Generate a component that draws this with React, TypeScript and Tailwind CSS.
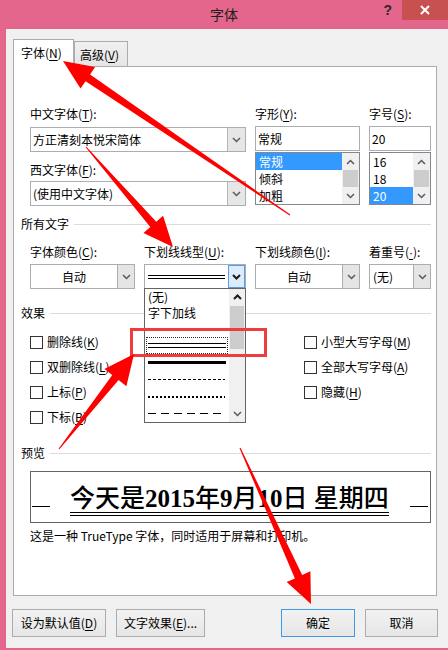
import React from "react";

const UI: React.CSSProperties = { fontFamily: '"Noto Sans CJK SC", "Noto Sans", sans-serif' };
const SERIF: React.CSSProperties = { fontFamily: '"Liberation Serif", "Noto Sans CJK SC", serif' };

function M({ t, k }: { t: string; k: string }) {
  const p = t.lastIndexOf("(" + k + ")");
  if (p < 0) return <>{t}</>;
  return (
    <>
      {t.slice(0, p + 1)}
      <span
        className="underline decoration-1 underline-offset-[2px]"
        style={k === "·" ? { fontFamily: '"Liberation Sans", sans-serif' } : undefined}
      >
        {k}
      </span>
      {t.slice(p + 2)}
    </>
  );
}

function Chev({ up = false, dark = false }: { up?: boolean; dark?: boolean }) {
  return (
    <svg width="9" height="6" viewBox="0 0 9 6">
      <path
        d={up ? "M1 5 L4.5 1.5 L8 5" : "M1 1 L4.5 4.5 L8 1"}
        fill="none"
        stroke={dark ? "#1a1a1a" : "#5a5a5a"}
        strokeWidth={dark ? 2 : 1.5}
      />
    </svg>
  );
}

function Label({ t, k }: { t: string; k: string }) {
  return (
    <div className="h-[16px] text-[12px] leading-[16px] text-black whitespace-nowrap">
      <M t={t} k={k} />
    </div>
  );
}

function EditCombo({ text }: { text: string }) {
  return (
    <div className="h-[25px] border border-[#abadb3] bg-white flex">
      <div className="flex-1 pl-[2px] text-[12px] leading-[23px] text-black whitespace-nowrap overflow-hidden">{text}</div>
      <div className="w-[18px] bg-[#e6e6e6] border-l border-[#b5b5b5] flex items-center justify-center">
        <Chev />
      </div>
    </div>
  );
}

function EditBox({ text }: { text: string }) {
  return (
    <div className="h-[25px] border border-[#abadb3] bg-white pl-[2px] text-[12px] leading-[23px] text-black">{text}</div>
  );
}

function ListBox({ items, sel }: { items: string[]; sel: number }) {
  return (
    <div className="h-[53px] border border-[#828790] bg-white flex">
      <div className="flex-1 flex flex-col">
        {items.map((it, i) => (
          <div
            key={it}
            className={
              i === sel
                ? "h-[17px] leading-[17px] pl-[3px] text-[12px] bg-[#3399ff] text-white"
                : "h-[17px] leading-[17px] pl-[3px] text-[12px] text-black"
            }
          >
            {it}
          </div>
        ))}
      </div>
      <div className="w-[17px] bg-[#f0f0f0] flex flex-col">
        <div className="h-[17px] flex items-center justify-center">
          <Chev up />
        </div>
        <div className="flex-1 mx-[1px] bg-[#cdcdcd]" />
        <div className="h-[17px] flex items-center justify-center">
          <Chev />
        </div>
      </div>
    </div>
  );
}

function DropCombo({ children, focus = false, center = false }: { children: React.ReactNode; focus?: boolean; center?: boolean }) {
  return (
    <div className="h-[25px] border border-[#acacac] bg-white flex">
      <div
        className={
          center
            ? "flex-1 flex items-center justify-center text-[12px] text-black"
            : "flex-1 flex items-center pl-[3px] text-[12px] text-black"
        }
      >
        {children}
      </div>
      <div
        className={
          focus
            ? "w-[17px] border border-[#569de5] bg-[#dcecfc] flex items-center justify-center"
            : "w-[17px] border-l border-[#acacac] bg-[#e5e5e5] flex items-center justify-center"
        }
      >
        <Chev dark={focus} />
      </div>
    </div>
  );
}

function Check({ t, k }: { t: string; k: string }) {
  return (
    <div className="h-[16px] flex items-center">
      <div className="w-[13px] h-[13px] border border-[#333333] bg-white" />
      <span className="ml-[4px] text-[12px] leading-[16px] text-black whitespace-nowrap">
        <M t={t} k={k} />
      </span>
    </div>
  );
}

function Group({ t, gap }: { t: string; gap: string }) {
  return (
    <div className={`-ml-[9px] flex items-center h-[16px] ${gap}`}>
      <span className="text-[12px] leading-[16px] text-black whitespace-nowrap">{t}</span>
      <div className="flex-1 h-px bg-[#dcdcdc] ml-[5px]" />
    </div>
  );
}

function Btn({ w, children, def = false }: { w: string; children: React.ReactNode; def?: boolean }) {
  return (
    <div
      className={
        def
          ? `h-[28px] ${w} border border-[#3c9ae7] flex items-center justify-center text-[12px] text-black bg-linear-to-b from-[#f2f2f2] to-[#e6e6e6]`
          : `h-[28px] ${w} border border-[#acacac] flex items-center justify-center text-[12px] text-black bg-linear-to-b from-[#f2f2f2] to-[#e6e6e6]`
      }
    >
      {children}
    </div>
  );
}

function arrowPts(x1: number, y1: number, x2: number, y2: number, tw: number, sw: number, hl: number, hw: number) {
  const dx = x2 - x1;
  const dy = y2 - y1;
  const L = Math.hypot(dx, dy);
  const ux = dx / L;
  const uy = dy / L;
  const nx = -uy;
  const ny = ux;
  const bx = x2 - ux * hl;
  const by = y2 - uy * hl;
  const p = [
    [x1 + (nx * tw) / 2, y1 + (ny * tw) / 2],
    [bx + (nx * sw) / 2, by + (ny * sw) / 2],
    [bx + (nx * hw) / 2, by + (ny * hw) / 2],
    [x2, y2],
    [bx - (nx * hw) / 2, by - (ny * hw) / 2],
    [bx - (nx * sw) / 2, by - (ny * sw) / 2],
    [x1 - (nx * tw) / 2, y1 - (ny * tw) / 2],
  ];
  return p.map((q) => `${q[0].toFixed(1)},${q[1].toFixed(1)}`).join(" ");
}

function LineRow({ children, focus = false }: { children: React.ReactNode; focus?: boolean }) {
  return (
    <div className="h-[17px] px-[1px] flex">
      <div
        className={
          focus
            ? "flex-1 border border-dotted border-[#2a2a2a] flex items-center px-[1px]"
            : "flex-1 border border-transparent flex items-center px-[1px]"
        }
      >
        {children}
      </div>
    </div>
  );
}

function UnderlineList() {
  return (
    <div className="absolute left-0 top-[24px] w-[102px] h-[135px] border border-[#646464] bg-white flex z-10">
      <div className="flex-1 flex flex-col">
        <div className="h-[16px] leading-[16px] pl-[3px] text-[12px] text-black">(无)</div>
        <div className="h-[15px] leading-[15px] pl-[3px] text-[12px] text-black">字下加线</div>
        <LineRow>
          <div className="w-full h-px bg-black" />
        </LineRow>
        <LineRow focus>
          <div className="w-full flex flex-col gap-[3px]">
            <div className="h-px bg-black" />
            <div className="h-px bg-black" />
          </div>
        </LineRow>
        <LineRow>
          <div className="w-full h-[3px] bg-black" />
        </LineRow>
        <LineRow>
          <svg width="77" height="1" className="block">
            <line x1="0" y1="0.5" x2="77" y2="0.5" stroke="#000" strokeWidth="1" strokeDasharray="3 2" />
          </svg>
        </LineRow>
        <LineRow>
          <svg width="77" height="2" className="block">
            <line x1="0" y1="1" x2="77" y2="1" stroke="#000" strokeWidth="2" strokeDasharray="2 2" />
          </svg>
        </LineRow>
        <LineRow>
          <svg width="77" height="1" className="block">
            <line x1="0" y1="0.5" x2="77" y2="0.5" stroke="#000" strokeWidth="1" strokeDasharray="8 5" />
          </svg>
        </LineRow>
      </div>
      <div className="w-[16px] bg-[#f0f0f0] flex flex-col">
        <div className="h-[16px] flex items-center justify-center">
          <Chev up dark />
        </div>
        <div className="h-[43px] mt-[1px] mx-[1px] bg-[#cdcdcd]" />
        <div className="flex-1" />
        <div className="h-[16px] flex items-center justify-center">
          <Chev />
        </div>
      </div>
    </div>
  );
}

function Cjk({ children }: { children: React.ReactNode }) {
  return (
    <span className="font-medium" style={{ fontFamily: '"Noto Sans CJK SC", sans-serif' }}>
      {children}
    </span>
  );
}

export default function App() {
  return (
    <div className="relative w-[448px] h-[650px] bg-[#e4668c] overflow-hidden flex flex-col" style={UI}>
      {/* title bar */}
      <div className="h-[29px] shrink-0 grid grid-cols-[1fr_auto_1fr]">
        <div />
        <div className="text-[14px] leading-[28px] text-[#1e1e1e]">字体</div>
        <div className="flex justify-end items-start">
          <span className="mt-[2px] mr-[10px] text-[14px] font-bold leading-[16px] text-[#2a2a2a]" style={{ fontFamily: '"Liberation Sans", sans-serif' }}>
            ?
          </span>
          <div className="w-[46px] h-[20px] bg-[#c75050] flex items-center justify-center">
            <svg width="10" height="10" viewBox="0 0 10 10">
              <path d="M1 1 L9 9 M9 1 L1 9" stroke="#fff" strokeWidth="2" />
            </svg>
          </div>
        </div>
      </div>

      {/* client */}
      <div className="ml-[6px] h-[619px] bg-[#f0f0f0] flex flex-col">
        {/* tabs */}
        <div className="ml-[7px] mt-[10px] h-[27px] flex items-end relative z-10">
          <div className="w-[61px] h-[28px] -mb-px bg-white border border-b-0 border-[#acacac] pl-[7px] text-[12px] leading-[26px] text-black">
            <M t="字体(N)" k="N" />
          </div>
          <div className="w-[54px] h-[25px] bg-linear-to-b from-[#f0f0f0] to-[#e5e5e5] border border-b-0 border-[#acacac] pl-[5px] text-[12px] leading-[25px] text-black">
            <M t="高级(V)" k="V" />
          </div>
        </div>

        {/* panel */}
        <div className="ml-[7px] w-[424px] h-[530px] shrink-0 border border-[#acacac] bg-white pt-[39px] pl-[16px] pr-[5px] flex flex-col">
          <div className="flex gap-[9px]">
            <div className="w-[216px] flex flex-col">
              <Label t="中文字体(T):" k="T" />
              <div className="mt-[5px]">
                <EditCombo text="方正清刻本悦宋简体" />
              </div>
              <div className="mt-[10px]">
                <Label t="西文字体(F):" k="F" />
              </div>
              <div className="mt-[3px]">
                <EditCombo text="(使用中文字体)" />
              </div>
            </div>
            <div className="w-[105px] flex flex-col">
              <Label t="字形(Y):" k="Y" />
              <div className="mt-[4px]">
                <EditBox text="常规" />
              </div>
              <div className="mt-[1px]">
                <ListBox items={["常规", "倾斜", "加粗"]} sel={0} />
              </div>
            </div>
            <div className="w-[62px] flex flex-col">
              <Label t="字号(S):" k="S" />
              <div className="mt-[4px]">
                <EditBox text="20" />
              </div>
              <div className="mt-[1px]">
                <ListBox items={["16", "18", "20"]} sel={2} />
              </div>
            </div>
          </div>

          <Group t="所有文字" gap="mt-[10px]" />

          <div className="mt-[12px] flex gap-[9px]">
            <div className="w-[105px] flex flex-col">
              <Label t="字体颜色(C):" k="C" />
              <div className="mt-[4px]">
                <DropCombo center>自动</DropCombo>
              </div>
            </div>
            <div className="w-[102px] flex flex-col">
              <Label t="下划线线型(U):" k="U" />
              <div className="mt-[4px] relative">
                <DropCombo focus>
                  <div className="w-[77px] flex flex-col gap-[2px] mt-px">
                    <div className="h-px bg-black" />
                    <div className="h-px bg-black" />
                  </div>
                </DropCombo>
                <UnderlineList />
              </div>
            </div>
            <div className="w-[105px] flex flex-col">
              <Label t="下划线颜色(I):" k="I" />
              <div className="mt-[4px]">
                <DropCombo center>自动</DropCombo>
              </div>
            </div>
            <div className="w-[62px] flex flex-col">
              <Label t="着重号(·):" k="·" />
              <div className="mt-[4px]">
                <DropCombo>(无)</DropCombo>
              </div>
            </div>
          </div>

          <Group t="效果" gap="mt-[16px]" />

          <div className="mt-[13px] flex">
            <div className="w-[274px] flex flex-col gap-[9px]">
              <Check t="删除线(K)" k="K" />
              <Check t="双删除线(L)" k="L" />
              <Check t="上标(P)" k="P" />
              <Check t="下标(B)" k="B" />
            </div>
            <div className="flex flex-col gap-[9px]">
              <Check t="小型大写字母(M)" k="M" />
              <Check t="全部大写字母(A)" k="A" />
              <Check t="隐藏(H)" k="H" />
            </div>
          </div>

          <Group t="预览" gap="mt-[20px]" />

          <div className="mt-[10px] w-[401px] h-[52px] border border-[#646464] flex items-start">
            <div className="ml-[1px] mt-[34px] w-[18px] h-px bg-black" />
            <div className="ml-[20px] mt-[11px] border-b-[4px] border-double border-black">
              <div className="text-[25px] leading-[26px] font-bold text-black whitespace-nowrap" style={SERIF}>
                <Cjk>今天是</Cjk>2015<Cjk>年</Cjk>9<Cjk>月</Cjk>10<Cjk>日</Cjk> <Cjk>星期四</Cjk>
              </div>
            </div>
            <div className="ml-auto mr-[2px] mt-[34px] w-[18px] h-px bg-black" />
          </div>

          <div className="mt-[5px] h-[16px] text-[12px] leading-[16px] text-black">
            这是一种 TrueType 字体，同时适用于屏幕和打印机。
          </div>
        </div>

        {/* buttons */}
        <div className="mt-[13px] pl-[6px] pr-[10px] flex justify-between">
          <div className="flex gap-[10px]">
            <Btn w="w-[94px]">
              <M t="设为默认值(D)" k="D" />
            </Btn>
            <Btn w="w-[89px]">
              <M t="文字效果(E)..." k="E" />
            </Btn>
          </div>
          <div className="flex gap-[10px]">
            <Btn w="w-[74px]" def>
              确定
            </Btn>
            <Btn w="w-[73px]">取消</Btn>
          </div>
        </div>
      </div>

      {/* annotations overlay */}
      <svg className="absolute inset-0 pointer-events-none z-20" width="448" height="650" viewBox="0 0 448 650">
        <rect x="131.5" y="329.5" width="134" height="26" fill="none" stroke="#f03c3c" strokeWidth="3" />
        <polygon points={arrowPts(290, 215, 63, 61, 1, 8, 30, 26)} fill="#ff0000" />
        <polygon points={arrowPts(86, 147, 173, 247, 1, 8, 30, 26)} fill="#ff0000" />
        <polygon points={arrowPts(59, 449, 134, 354, 1, 8, 30, 28)} fill="#ff0000" />
        <polygon points={arrowPts(240, 448, 311, 604, 1, 8, 30, 26)} fill="#ff0000" />
      </svg>
    </div>
  );
}
